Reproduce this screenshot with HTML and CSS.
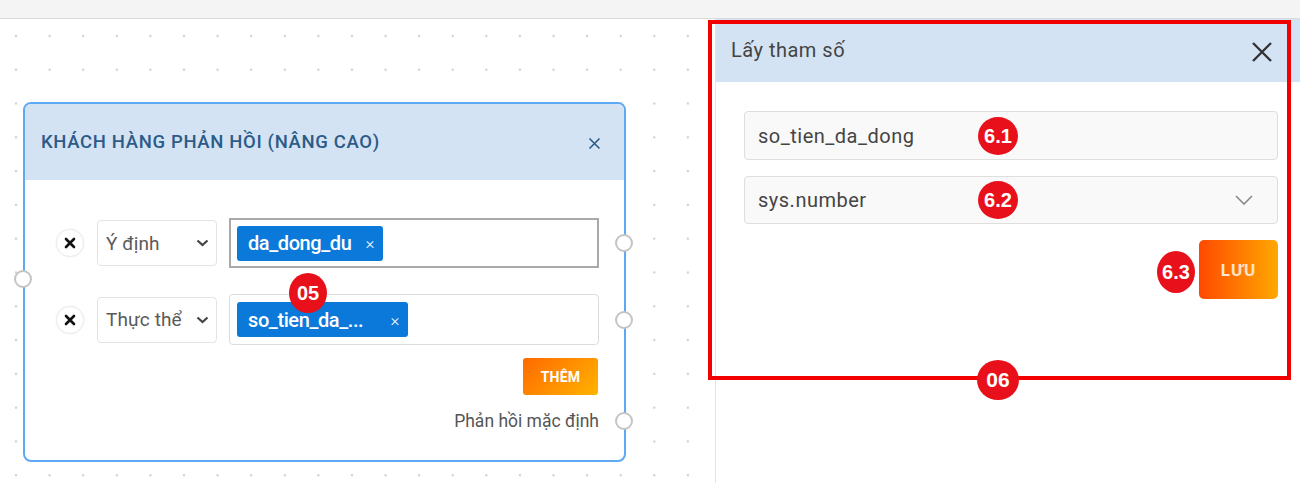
FILE: index.html
```html
<!DOCTYPE html>
<html lang="vi">
<head>
<meta charset="utf-8">
<link rel="stylesheet" href="styles.css">
</head>
<body>
<div class="topbar"></div>
<div class="main">
  <div class="canvas">
    <div class="node">
      <div class="node-head">
        <span class="node-title">KHÁCH HÀNG PHẢN HỒI (NÂNG CAO)</span>
        <svg class="node-close" width="13" height="13" viewBox="0 0 13 13"><path d="M1.5 1.5L11.5 11.5M11.5 1.5L1.5 11.5" stroke="#2c5b88" stroke-width="1.6"/></svg>
      </div>
      <div class="node-body">
        <div class="row">
          <span class="rm"><svg width="12" height="12" viewBox="0 0 12 12"><path d="M2 2L10 10M10 2L2 10" stroke="#111" stroke-width="2.6" stroke-linecap="round"/></svg></span>
          <div class="sel"><span>Ý định</span><svg class="chev" width="13" height="8" viewBox="0 0 13 8"><path d="M1.5 1.5L6.5 6L11.5 1.5" fill="none" stroke="#444" stroke-width="2.2"/></svg></div>
          <div class="tags focus"><span class="tag">da_dong_du<span class="tx">×</span></span></div>
          <span class="port port-r"></span>
        </div>
        <div class="row row2">
          <span class="rm"><svg width="12" height="12" viewBox="0 0 12 12"><path d="M2 2L10 10M10 2L2 10" stroke="#111" stroke-width="2.6" stroke-linecap="round"/></svg></span>
          <div class="sel"><span>Thực thể</span><svg class="chev" width="13" height="8" viewBox="0 0 13 8"><path d="M1.5 1.5L6.5 6L11.5 1.5" fill="none" stroke="#444" stroke-width="2.2"/></svg></div>
          <div class="tags"><span class="tag tag2">so_tien_da_...<span class="tx">×</span></span></div>
          <span class="port port-r"></span>
        </div>
        <div class="actions"><span class="btn-them">THÊM</span></div>
        <div class="default-row"><span>Phản hồi mặc định</span><span class="port port-r"></span></div>
      </div>
      <span class="port port-l"></span>
      <span class="badge b05">05</span>
    </div>
  </div>
  <div class="panel">
    <div class="panel-head">
      <span class="panel-title">Lấy tham số</span>
      <svg class="panel-close" width="22" height="22" viewBox="0 0 22 22"><path d="M2 2L20 20M20 2L2 20" stroke="#333" stroke-width="2.4"/></svg>
    </div>
    <div class="panel-body">
      <div class="field">so_tien_da_dong</div>
      <div class="field field-sel"><span>sys.number</span><svg width="18" height="10" viewBox="0 0 18 10"><path d="M1 1L9 9L17 1" fill="none" stroke="#888" stroke-width="1.6"/></svg></div>
      <div class="panel-actions"><span class="btn-luu">LƯU</span></div>
    </div>
  </div>
</div>
<div class="redbox"></div>
<span class="badge b61">6.1</span>
<span class="badge b62">6.2</span>
<span class="badge b63">6.3</span>
<span class="badge b06">06</span>
</body>
</html>
```
FILE: styles.css
```css
* { box-sizing: border-box; }
html, body { margin: 0; padding: 0; }
body {
  width: 1300px;
  height: 483px;
  overflow: hidden;
  position: relative;
  background: #fff;
  font-family: Roboto, "Noto Sans", "Liberation Sans", sans-serif;
}
.topbar {
  height: 19px;
  background: #f4f4f4;
  border-bottom: 1px solid #dadada;
}
.main {
  display: flex;
  height: 464px;
}
.canvas {
  width: 715px;
  flex: none;
  position: relative;
  background-color: #fff;
  background-image: radial-gradient(circle, #cfcfcf 1.1px, transparent 1.6px);
  background-size: 33.6px 33.8px;
  background-position: -0.8px 0px;
}
.node {
  position: absolute;
  left: 23px;
  top: 83px;
  width: 603px;
  height: 360px;
  border: 2px solid #5ea9f3;
  border-radius: 8px;
  background: #fff;
}
.node-head {
  height: 76px;
  background: #d4e3f3;
  border-radius: 6px 6px 0 0;
  display: flex;
  align-items: center;
  justify-content: space-between;
  padding: 0 23px 0 16px;
}
.node-title {
  font-size: 18.5px;
  font-weight: 500;
  color: #2c5b88;
  letter-spacing: 0.65px;
}
.node-close {
  margin-top: 3px;
}
.node-body {
  padding: 38px 25px 0 31px;
}
.row {
  display: flex;
  align-items: center;
  position: relative;
  height: 50px;
}
.row2 { margin-top: 26px; height: 51px; }
.rm {
  width: 28px;
  height: 28px;
  border-radius: 50%;
  background: #fff;
  border: 1px solid #ececec;
  box-shadow: 0 0 2px rgba(0,0,0,0.08);
  display: flex;
  align-items: center;
  justify-content: center;
  margin-right: 13px;
  flex: none;
}
.sel {
  width: 120px;
  height: 46px;
  border: 1px solid #e3e3e3;
  border-radius: 4px;
  display: flex;
  align-items: center;
  justify-content: space-between;
  padding: 0 7px 0 8px;
  font-size: 19px;
  color: #5a5a5a;
  letter-spacing: 0.1px;
  margin-right: 12px;
  flex: none;
  white-space: nowrap;
}
.chev { flex: none; }
.tags {
  flex: 1;
  height: 51px;
  border: 1px solid #dcdcdc;
  border-radius: 4px;
  display: flex;
  align-items: center;
  padding-left: 7px;
}
.tags.focus {
  height: 50px;
  border: 2px solid #a9a9a9;
  border-radius: 0;
  padding-left: 6px;
}
.tag {
  background: #0b79da;
  color: #fff;
  height: 35px;
  border-radius: 3px;
  display: inline-flex;
  align-items: center;
  padding: 0 9px 0 11px;
  font-size: 20px;
  font-weight: 500;
  letter-spacing: -0.4px;
  width: 146px;
  white-space: nowrap;
}
.tag2 { width: 171px; }
.tx {
  font-size: 17px;
  font-weight: 300;
  margin-left: auto;
  color: #e8f1fb;
}
.port {
  position: absolute;
  width: 18px;
  height: 18px;
  border-radius: 50%;
  background: #fff;
  border: 2px solid #c4c4c4;
}
.port-r {
  right: -34px;
  top: 50%;
  margin-top: -9px;
}
.port-l {
  left: -11px;
  top: 166px;
}
.actions {
  display: flex;
  justify-content: flex-end;
  margin-top: 13px;
  padding-right: 1px;
}
.btn-them {
  width: 75px;
  height: 37px;
  border-radius: 3px;
  background: linear-gradient(135deg, #ff6a00, #ffb300);
  color: #fff;
  font-size: 14px;
  font-weight: 700;
  letter-spacing: 0.2px;
  display: flex;
  align-items: center;
  justify-content: center;
}
.default-row {
  position: relative;
  display: flex;
  justify-content: flex-end;
  align-items: center;
  height: 26px;
  margin-top: 13px;
  font-size: 17.5px;
  color: #555;
  letter-spacing: 0;
}
.badge {
  position: absolute;
  border-radius: 50%;
  background: #e8101a;
  color: #fff;
  font-weight: 700;
  display: flex;
  align-items: center;
  justify-content: center;
  font-family: "Liberation Sans", Arial, sans-serif;
  letter-spacing: 0;
}
.b05 { width: 38px; height: 40px; left: 264px; top: 169px; font-size: 20px; }
.b61 { width: 40px; height: 38px; left: 978px; top: 117px; font-size: 20px; }
.b62 { width: 40px; height: 38px; left: 978px; top: 181px; font-size: 20px; }
.b63 { width: 38px; height: 42px; left: 1157px; top: 251px; font-size: 20px; }
.b06 { width: 42px; height: 40px; left: 977px; top: 360px; font-size: 21px; }
.panel {
  flex: 1;
  border-left: 1px solid #e4e4e4;
  position: relative;
}
.panel-head {
  height: 63px;
  background: #d4e3f3;
  display: flex;
  align-items: center;
  justify-content: space-between;
  padding: 0 27px 0 15px;
}
.panel-title {
  font-size: 20px;
  color: #444;
  letter-spacing: 0.5px;
  margin-top: -2px;
}
.panel-close { margin-top: 2px; }
.panel-body {
  padding: 29px 22px 0 28px;
}
.field {
  height: 49px;
  border: 1px solid #dedede;
  border-radius: 4px;
  background: #f9f9f9;
  display: flex;
  align-items: center;
  padding: 0 13px;
  font-size: 20px;
  color: #454545;
  letter-spacing: 0.5px;
}
.field-sel {
  margin-top: 16px;
  height: 48px;
  justify-content: space-between;
  padding-right: 24px;
}
.panel-actions {
  display: flex;
  justify-content: flex-end;
  margin-top: 16px;
}
.btn-luu {
  width: 79px;
  height: 59px;
  border-radius: 5px;
  background: linear-gradient(90deg, #ff4a00, #ffa800);
  color: #ffe4cc;
  font-size: 17px;
  font-weight: 700;
  letter-spacing: 1px;
  display: flex;
  align-items: center;
  justify-content: center;
}
.redbox {
  position: absolute;
  left: 708px;
  top: 20px;
  width: 583px;
  height: 360px;
  border: 4px solid #f20000;
  pointer-events: none;
}
```
